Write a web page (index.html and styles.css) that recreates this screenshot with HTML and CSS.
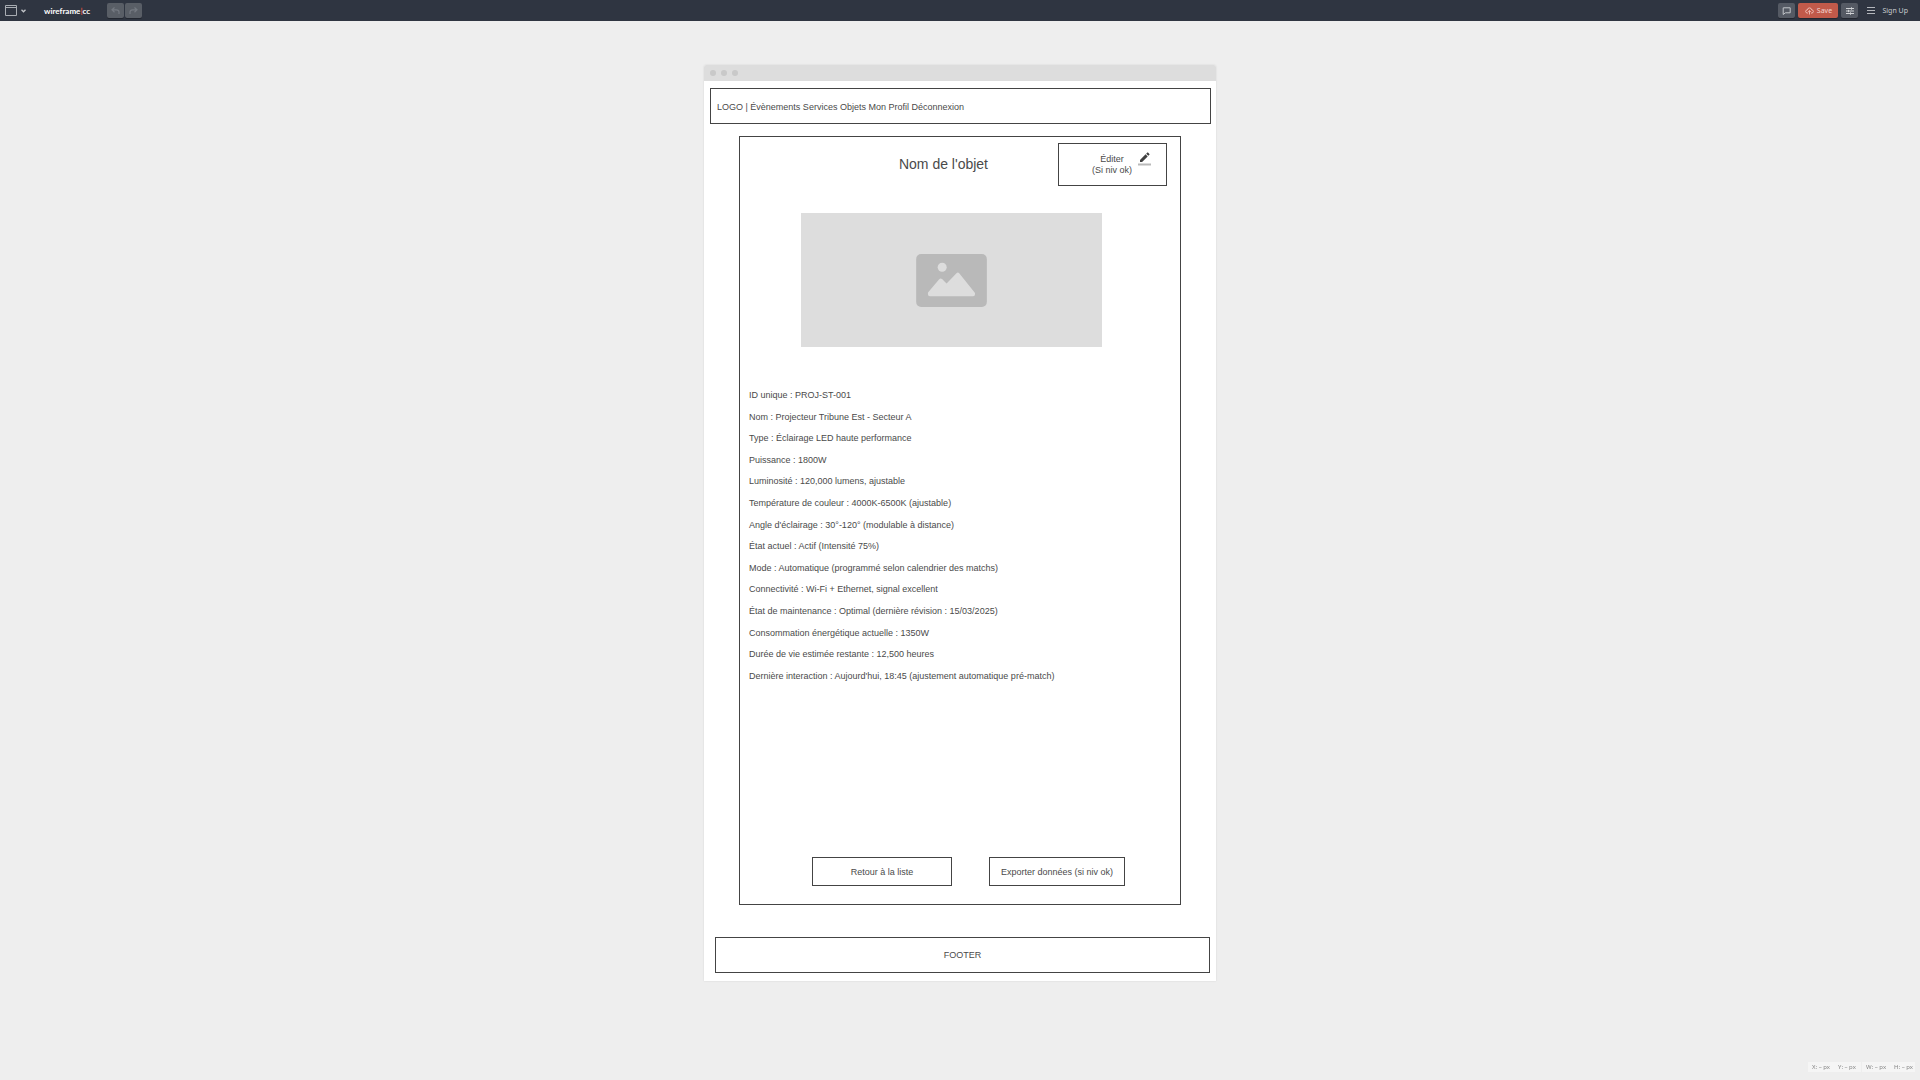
FILE: index.html
```html
<!DOCTYPE html>
<html lang="fr">
<head>
<meta charset="utf-8">
<title>wireframe|cc</title>
<link rel="stylesheet" href="styles.css">
</head>
<body>
<header class="topbar">
  <button class="device-menu" type="button" aria-label="Format">
    <svg width="12" height="11" viewBox="0 0 12 11"><path d="M.5.5h11v10H.5z" fill="none" stroke="#a9adb3"/><path d="M0 2.500h12" stroke="#a9adb3"/></svg>
    <svg width="5" height="4" viewBox="0 0 5 4"><path d="M.5.8l2 2 2-2" fill="none" stroke="#c3c6ca" stroke-width="1.300"/></svg>
  </button>
  <a class="brand" href="#">wireframe<span class="brand-bar">|</span>cc</a>
  <div class="history">
    <button class="tool" type="button" aria-label="Annuler"><svg width="9" height="8" viewBox="0 0 9 8"><path d="M3.500.5L1 2.800l2.500 2.400M1 2.800h4.500q2.500 0 2.500 2.200V7" fill="none" stroke="#747981" stroke-width="1.200"/></svg></button>
    <button class="tool" type="button" aria-label="Rétablir"><svg width="9" height="8" viewBox="0 0 9 8"><path d="M5.500.5L8 2.800 5.500 5.200M8 2.800H3.500Q1 2.800 1 5v2" fill="none" stroke="#747981" stroke-width="1.200"/></svg></button>
  </div>
  <div class="actions">
    <button class="tool" type="button" aria-label="Commentaires"><svg width="9" height="8" viewBox="0 0 9 8"><path d="M1.500.8h6.700v5H3.400L1.200 7.500V.8z" fill="none" stroke="#c3c6ca"/></svg></button>
    <button class="save" type="button"><svg width="9" height="8" viewBox="0 0 9 8"><path d="M3 6H2.200Q.6 5.800.6 4.400T2.300 2.900Q2.600.9 4.500.9t2.200 2q1.700 0 1.700 1.500T6.900 6H6M4.500 7.500V3.600M3.200 4.900l1.300-1.300 1.300 1.300" fill="none" stroke="#f0c4bd" stroke-width=".9"/></svg>Save</button>
    <button class="tool settings" type="button" aria-label="Réglages"><svg width="8" height="8" viewBox="0 0 8 8"><path d="M0 1.500h8M0 4h8M0 6.500h8M5.500.3v2.400M2.500 2.800v2.400M4.500 5.300v2.400" fill="none" stroke="#d0d2d5"/></svg></button>
    <button class="menu" type="button" aria-label="Menu"><svg width="8" height="7" viewBox="0 0 8 7"><path d="M0 .5h8M0 3.500h8M0 6.500h8" stroke="#b4b7bc"/></svg></button>
    <a class="signup" href="#">Sign Up</a>
  </div>
</header>

<main class="workspace">
  <article class="frame">
    <div class="frame-bar"><i class="dot"></i><i class="dot"></i><i class="dot"></i></div>
    <div class="page">
      <nav class="box nav">LOGO | Évènements Services Objets Mon Profil Déconnexion</nav>
      <section class="box object">
        <div class="object-head">
          <h1 class="title">Nom de l'objet</h1>
          <button class="box edit" type="button">
            <span class="edit-label">Éditer<br>(Si niv ok)</span>
            <svg class="pencil" width="13" height="14" viewBox="0 0 13 14"><path d="M2 10V7.900L7.600 2.300l2.100 2.100L4.100 10zM8.200 1.700L9.300.6q.4-.3.700 0l1.400 1.400q.3.300 0 .7l-1.100 1.100z" fill="#3f3f3f"/><path d="M0 11.500h13v2H0z" fill="#b9b9b9"/></svg>
          </button>
        </div>
        <div class="picture">
          <svg width="71" height="53" viewBox="0 0 72 54"><rect width="72" height="54" rx="5" fill="#b9b9b9"/><circle cx="26.500" cy="13.500" r="4.600" fill="#ddd"/><path d="M14 40L25 27l6 6L42.500 21 58 40.500V41H14z" fill="#ddd" stroke="#ddd" stroke-width="4" stroke-linejoin="round"/></svg>
        </div>
        <ul class="details">
          <li>ID unique : PROJ-ST-001</li>
          <li>Nom : Projecteur Tribune Est - Secteur A</li>
          <li>Type : Éclairage LED haute performance</li>
          <li>Puissance : 1800W</li>
          <li>Luminosité : 120,000 lumens, ajustable</li>
          <li>Température de couleur : 4000K-6500K (ajustable)</li>
          <li>Angle d'éclairage : 30°-120° (modulable à distance)</li>
          <li>État actuel : Actif (Intensité 75%)</li>
          <li>Mode : Automatique (programmé selon calendrier des matchs)</li>
          <li>Connectivité : Wi-Fi + Ethernet, signal excellent</li>
          <li>État de maintenance : Optimal (dernière révision : 15/03/2025)</li>
          <li>Consommation énergétique actuelle : 1350W</li>
          <li>Durée de vie estimée restante : 12,500 heures</li>
          <li>Dernière interaction : Aujourd'hui, 18:45 (ajustement automatique pré-match)</li>
        </ul>
        <div class="buttons">
          <button class="box back" type="button">Retour à la liste</button>
          <button class="box export" type="button">Exporter données (si niv ok)</button>
        </div>
      </section>
      <footer class="box footer">FOOTER</footer>
    </div>
  </article>
</main>

<aside class="coords">
  <div class="coord-group"><span>X: – px</span><span>Y: – px</span></div>
  <div class="coord-group"><span>W: – px</span><span>H: – px</span></div>
</aside>
</body>
</html>
```
FILE: styles.css
```css
* { box-sizing: border-box; }

body {
  margin: 0;
  min-height: 100vh;
  background: #eee;
  color: #4a4a4a;
  font: 9px/11px "Liberation Sans", Arial, sans-serif;
}

button {
  margin: 0;
  padding: 0;
  border: 0;
  background: none;
  color: inherit;
  font: inherit;
}

svg { display: block; flex: none; }

.topbar {
  display: flex;
  align-items: center;
  height: 21px;
  padding: 0 12px 0 5px;
  background: #2f3541;
  color: #c9ccd0;
  font: 7px/12px "Noto Sans", sans-serif;
}

.topbar a { color: inherit; text-decoration: none; }

.device-menu {
  display: flex;
  align-items: center;
  gap: 4px;
  width: 39px;
}

.topbar .brand {
  width: 63px;
  color: #fff;
  font: bold 8px/12px Lato, sans-serif;
}

.brand-bar { color: #e5533c; }

.history { display: flex; gap: 1px; }

.tool {
  display: flex;
  align-items: center;
  justify-content: center;
  width: 17px;
  height: 15px;
  border-radius: 2px;
  background: #555a64;
  box-shadow: 0 1px 0 #22262f;
}

.history .tool { background: #595e66; }

.actions {
  display: flex;
  align-items: center;
  margin-left: auto;
}

.save {
  display: flex;
  align-items: center;
  justify-content: center;
  gap: 3px;
  width: 40px;
  height: 15px;
  margin: 0 3px;
  border-radius: 2px;
  background: #c15a4a;
  box-shadow: 0 1px 0 #22262f;
  color: #f3d5d0;
}

.menu { margin: 0 7px 0 9px; }

.workspace {
  display: flex;
  justify-content: center;
  padding: 44px 20px 99px;
}

.frame {
  width: 512px;
  max-width: 100%;
  border-radius: 2px 2px 0 0;
  background: #fff;
  box-shadow: 0 0 2px rgba(0, 0, 0, .12);
}

.frame-bar {
  display: flex;
  align-items: center;
  gap: 5px;
  height: 16px;
  padding-left: 6px;
  border-radius: 2px 2px 0 0;
  background: #ddd;
}

.dot {
  width: 6px;
  height: 6px;
  border-radius: 50%;
  background: #c9c9c9;
}

.page { padding: 7px 5px 8px 6px; }

.box {
  border: 1px solid #444;
  background: #fff;
}

.nav {
  padding: 13px 6px 10px;
}

.object {
  margin: 12px 30px 32px 29px;
  padding: 6px 13px 18px 9px;
}

.object-head {
  display: flex;
  align-items: flex-start;
  justify-content: flex-end;
  gap: 70px;
}

.title {
  margin: 13px 0 0;
  font-size: 14px;
  line-height: 16px;
  font-weight: 400;
}

.edit {
  display: flex;
  align-items: flex-start;
  justify-content: flex-end;
  gap: 6px;
  width: 109px;
  height: 43px;
  padding: 8px 15px 0 0;
}

.edit-label { padding-top: 2px; }

.picture {
  display: flex;
  align-items: center;
  justify-content: center;
  width: 301px;
  height: 134px;
  margin: 27px auto 43px 52px;
  background: #ddd;
}

.details {
  display: flex;
  flex-direction: column;
  justify-content: space-between;
  height: 292px;
  margin: 0 0 175px;
  padding: 0;
  list-style: none;
}

.buttons {
  display: flex;
  gap: 37px;
  padding-left: 63px;
}

.back, .export {
  height: 29px;
  padding-top: 2px;
}

.back { width: 140px; }
.export { width: 136px; }

.footer {
  margin: 0 1px 0 5px;
  padding: 12px 0 11px;
  text-align: center;
}

.coords {
  position: fixed;
  right: 5px;
  bottom: 8px;
  display: flex;
  gap: 1px;
  color: #858585;
  font: 6px/10px "Noto Sans", sans-serif;
}

.coord-group {
  display: flex;
  gap: 8px;
  width: 53px;
  padding-left: 4px;
  background: #f5f5f5;
  white-space: nowrap;
}
```
